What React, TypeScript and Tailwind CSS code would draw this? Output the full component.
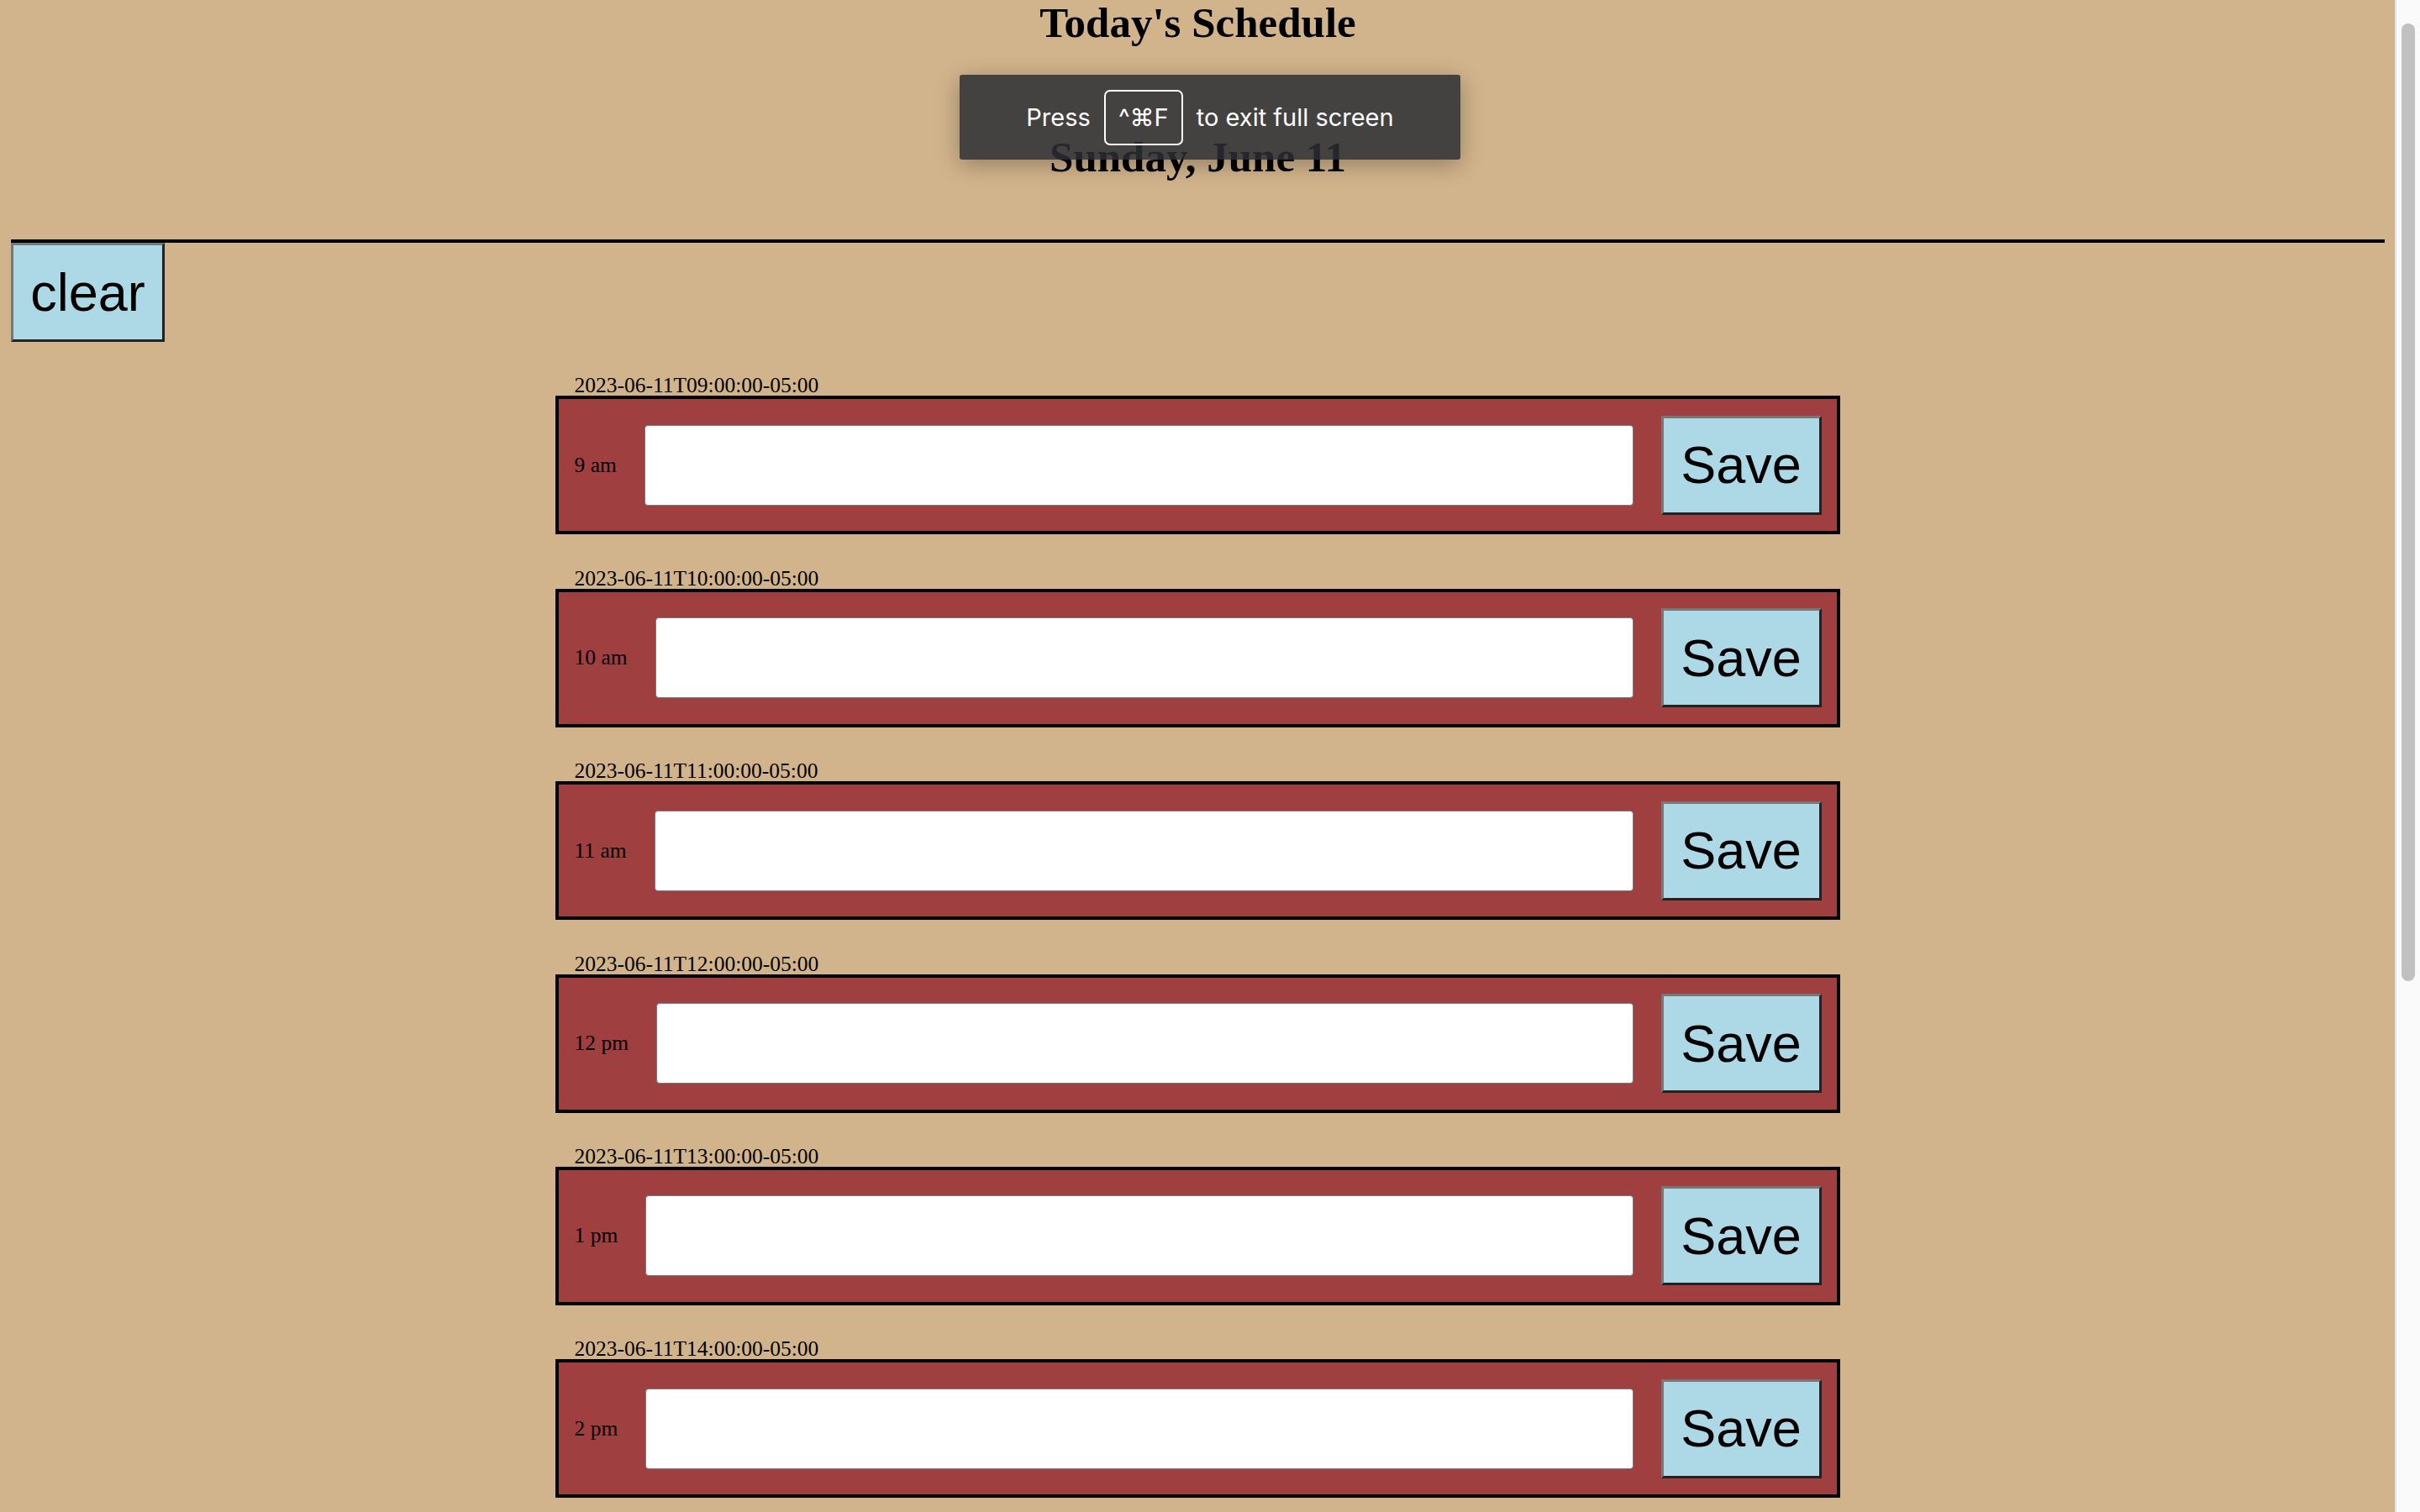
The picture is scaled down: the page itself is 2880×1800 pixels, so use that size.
import React, { useState } from "react";

const hours = [9, 10, 11, 12, 13, 14];

function hourLabel(h: number) {
  if (h < 12) return `${h} am`;
  if (h === 12) return "12 pm";
  return `${h - 12} pm`;
}

function stamp(h: number) {
  return `2023-06-11T${String(h).padStart(2, "0")}:00:00-05:00`;
}

function HourRow({ hour }: { hour: number }) {
  const [text, setText] = useState("");

  const handleChange = (event: React.ChangeEvent<HTMLInputElement>) => {
    setText(event.target.value);
  };

  return (
    <div className="mt-[40.4px]">
      <div className="h-[24px] pl-[23px] text-[25.5px] leading-[24px]">{stamp(hour)}</div>
      <div className="flex h-[165px] items-center border-4 border-black bg-[#a03f40] pl-[19px] pr-[18px]">
        <span className="text-[25.5px]">{hourLabel(hour)}</span>
        <input
          className="mx-[33px] h-[96px] flex-1 rounded-[4px] border border-[#7a7a7a] bg-white px-3 text-[25px] outline-none"
          value={text}
          onChange={handleChange}
        />
        <button className="h-[118px] w-[191px] border-[3px] border-t-[#777] border-l-[#777] border-b-[#222] border-r-[#222] bg-[#add8e6] font-['Liberation_Sans',Arial,sans-serif] text-[63px] leading-none text-black">
          Save
        </button>
      </div>
    </div>
  );
}

export default function App() {
  return (
    <div className="relative flex h-[1800px] w-full overflow-hidden font-['Liberation_Serif','Times_New_Roman',serif] text-black">
      <div className="min-w-0 flex-1 bg-[#d2b48c]">
        <header className="ml-[13px] mr-[12px] border-b-4 border-black pb-[71px] text-center">
          <h1 className="text-[51px] font-bold leading-[54px]">Today's Schedule</h1>
          <p className="mt-[106px] text-[51px] font-bold leading-[54px]">Sunday, June 11</p>
        </header>
        <button className="ml-[13px] block h-[118px] w-[183px] border-[3px] border-t-[#777] border-l-[#777] border-b-[#222] border-r-[#222] bg-[#add8e6] font-['Liberation_Sans',Arial,sans-serif] text-[63px] leading-none text-black">
          clear
        </button>
        <main className="mx-auto w-[1529px]">
          {hours.map((h) => (
            <HourRow key={h} hour={h} />
          ))}
        </main>
      </div>

      {/* scrollbar */}
      <div className="w-[30px] shrink-0 border-l-2 border-[#e4e4e4] bg-[#fafafa] pl-[6px] pt-[28px]">
        <div className="h-[1140px] w-[16px] rounded-full bg-[#c1c1c1]" />
      </div>

      {/* browser full screen hint */}
      <div className="absolute left-1/2 top-[89px] flex h-[101px] w-[596px] -translate-x-1/2 items-center justify-center gap-4 rounded-[3px] bg-[rgba(44,46,52,0.85)] font-['Inter','DejaVu_Sans',sans-serif] text-[29px] text-white shadow-[0_6px_28px_rgba(0,0,0,0.3)]">
        <span>Press</span>
        <span className="flex h-[66px] w-[94px] items-center justify-center rounded-[7px] border-2 border-white">^⌘F</span>
        <span>to exit full screen</span>
      </div>
    </div>
  );
}
